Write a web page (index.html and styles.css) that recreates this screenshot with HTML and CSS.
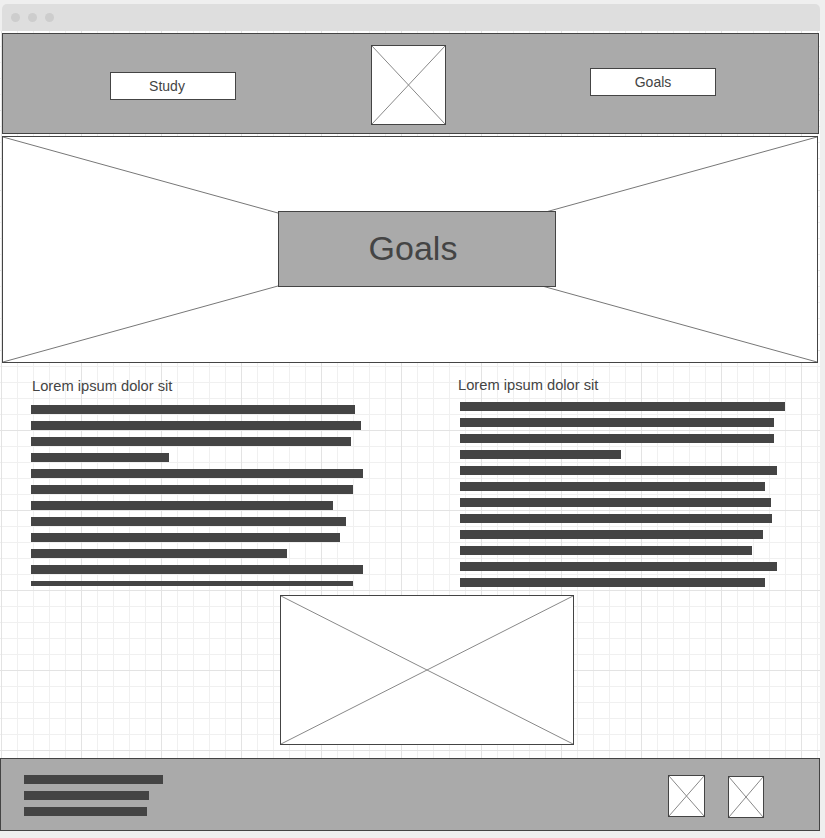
FILE: index.html
```html
<!DOCTYPE html>
<html lang="en">
<head>
  <meta charset="UTF-8">
  <meta name="viewport" content="width=device-width, initial-scale=1.0">
  <title>Goals - Wireframe</title>
  <link rel="stylesheet" href="styles.css">
</head>
<body>
  <div class="chrome">
    <span class="dot"></span>
    <span class="dot"></span>
    <span class="dot"></span>
  </div>

  <div class="page">
    <header class="topbar">
      <div class="btn btn-study">Study</div>
      <div class="ph logo">
        <svg viewBox="0 0 100 100" preserveAspectRatio="none"><path d="M0 0L100 100M100 0L0 100"/></svg>
      </div>
      <div class="btn btn-goals">Goals</div>
    </header>

    <section class="hero">
      <svg class="hero-x" viewBox="0 0 100 100" preserveAspectRatio="none"><path d="M0 0L100 100M100 0L0 100"/></svg>
      <div class="hero-title">Goals</div>
    </section>

    <section class="columns">
      <div class="col col-left">
        <h2>Lorem ipsum dolor sit</h2>
        <div class="lines">
          <span style="width:324px"></span>
          <span style="width:330px"></span>
          <span style="width:320px"></span>
          <span style="width:138px"></span>
          <span style="width:332px"></span>
          <span style="width:322px"></span>
          <span style="width:302px"></span>
          <span style="width:315px"></span>
          <span style="width:309px"></span>
          <span style="width:256px"></span>
          <span style="width:332px"></span>
          <span style="width:322px"></span>
        </div>
      </div>
      <div class="col col-right">
        <h2>Lorem ipsum dolor sit</h2>
        <div class="lines">
          <span style="width:325px"></span>
          <span style="width:314px"></span>
          <span style="width:314px"></span>
          <span style="width:161px"></span>
          <span style="width:317px"></span>
          <span style="width:305px"></span>
          <span style="width:311px"></span>
          <span style="width:312px"></span>
          <span style="width:303px"></span>
          <span style="width:292px"></span>
          <span style="width:317px"></span>
          <span style="width:305px"></span>
        </div>
      </div>
    </section>

    <div class="ph picture">
      <svg viewBox="0 0 100 100" preserveAspectRatio="none"><path d="M0 0L100 100M100 0L0 100"/></svg>
    </div>

    <footer class="footer">
      <div class="foot-lines">
        <span style="width:139px"></span>
        <span style="width:125px"></span>
        <span style="width:123px"></span>
      </div>
      <div class="foot-icons">
        <div class="ph icon icon-a">
          <svg viewBox="0 0 100 100" preserveAspectRatio="none"><path d="M0 0L100 100M100 0L0 100"/></svg>
        </div>
        <div class="ph icon icon-b">
          <svg viewBox="0 0 100 100" preserveAspectRatio="none"><path d="M0 0L100 100M100 0L0 100"/></svg>
        </div>
      </div>
    </footer>
  </div>
</body>
</html>
```

FILE: styles.css
```css
* {
  box-sizing: border-box;
  margin: 0;
  padding: 0;
}
body {
  width: 825px;
  background-color: #efefef;
  font-family: "Liberation Sans", Arial, sans-serif;
  color: #444;
}
.chrome {
  display: flex;
  align-items: center;
  gap: 8px;
  height: 27px;
  margin: 4px 5px 0 2px;
  padding-left: 9px;
  background-color: #dedede;
  border-radius: 5px 5px 0 0;
}
.dot {
  width: 9px;
  height: 9px;
  border-radius: 50%;
  background-color: #cdcdcd;
}
.page {
  width: 820px;
  height: 800px;
  overflow: hidden;
  padding-top: 2px;
  background-color: #fff;
  background-image:
    linear-gradient(to right, #e3e3e3 1px, transparent 1px),
    linear-gradient(to bottom, #e3e3e3 1px, transparent 1px),
    linear-gradient(to right, #f0f0f0 1px, transparent 1px),
    linear-gradient(to bottom, #f0f0f0 1px, transparent 1px);
  background-size: 80px 80px, 80px 80px, 16px 16px, 16px 16px;
  background-position: 1px 79px, 1px 79px, 1px 15px, 1px 15px;
}

/* placeholders */
.ph {
  background-color: #fff;
  border: 1px solid #444;
}
.ph svg, .hero-x {
  display: block;
  width: 100%;
  height: 100%;
}
.ph path, .hero-x path {
  fill: none;
  stroke: #888;
  stroke-width: 1;
  vector-effect: non-scaling-stroke;
}

/* header */
.topbar {
  display: flex;
  align-items: flex-start;
  width: 817px;
  height: 101px;
  margin-left: 2px;
  background-color: #aaa;
  border: 1px solid #444;
}
.btn {
  display: flex;
  align-items: center;
  justify-content: center;
  width: 126px;
  height: 28px;
  background-color: #fff;
  border: 1px solid #444;
  font-size: 14px;
}
.btn-study {
  margin: 38px 0 0 107px;
  padding-right: 12px;
}
.logo {
  width: 75px;
  height: 80px;
  margin: 11px 0 0 135px;
}
.btn-goals {
  margin: 34px 0 0 144px;
}

/* hero */
.hero {
  position: relative;
  display: flex;
  align-items: center;
  justify-content: center;
  width: 816px;
  height: 227px;
  margin: 2px 0 0 2px;
  background-color: #fff;
  border: 1px solid #444;
}
.hero-x {
  position: absolute;
  top: 0;
  left: 0;
}
.hero-x path {
  stroke: #777;
}
.hero-title {
  position: relative;
  display: flex;
  align-items: center;
  justify-content: center;
  width: 278px;
  height: 76px;
  margin: 0 0 2px 14px;
  padding-right: 8px;
  background-color: #aaa;
  border: 1px solid #444;
  font-size: 34px;
}

/* text columns */
.columns {
  display: grid;
  grid-template-columns: 429px 1fr;
  height: 224px;
  padding-left: 31px;
}
.col h2 {
  font-size: 14.7px;
  font-weight: normal;
  line-height: 16px;
}
.col-left {
  padding-top: 15px;
}
.col-left h2 {
  padding-left: 1px;
}
.col-right {
  padding-top: 14px;
}
.col-right h2 {
  margin-left: -2px;
}
.lines, .foot-lines {
  display: flex;
  flex-direction: column;
  gap: 7px;
  overflow: hidden;
}
.lines span, .foot-lines span {
  display: block;
  flex-shrink: 0;
  height: 9px;
  background-color: #444;
}
.col-left .lines {
  height: 181px;
  margin-top: 11px;
}
.col-right .lines {
  height: 185px;
  margin-top: 9px;
}

.picture {
  width: 294px;
  height: 150px;
  margin: 8px 0 0 280px;
}

/* footer */
.footer {
  display: flex;
  align-items: flex-start;
  width: 820px;
  height: 73px;
  margin-top: 13px;
  padding: 16px 55px 0 23px;
  background-color: #aaa;
  border: 1px solid #444;
}
.foot-icons {
  display: flex;
  align-items: flex-start;
  gap: 23px;
  margin-left: auto;
}
.icon-a {
  width: 37px;
  height: 42px;
}
.icon-b {
  width: 36px;
  height: 42px;
  margin-top: 1px;
}
```
